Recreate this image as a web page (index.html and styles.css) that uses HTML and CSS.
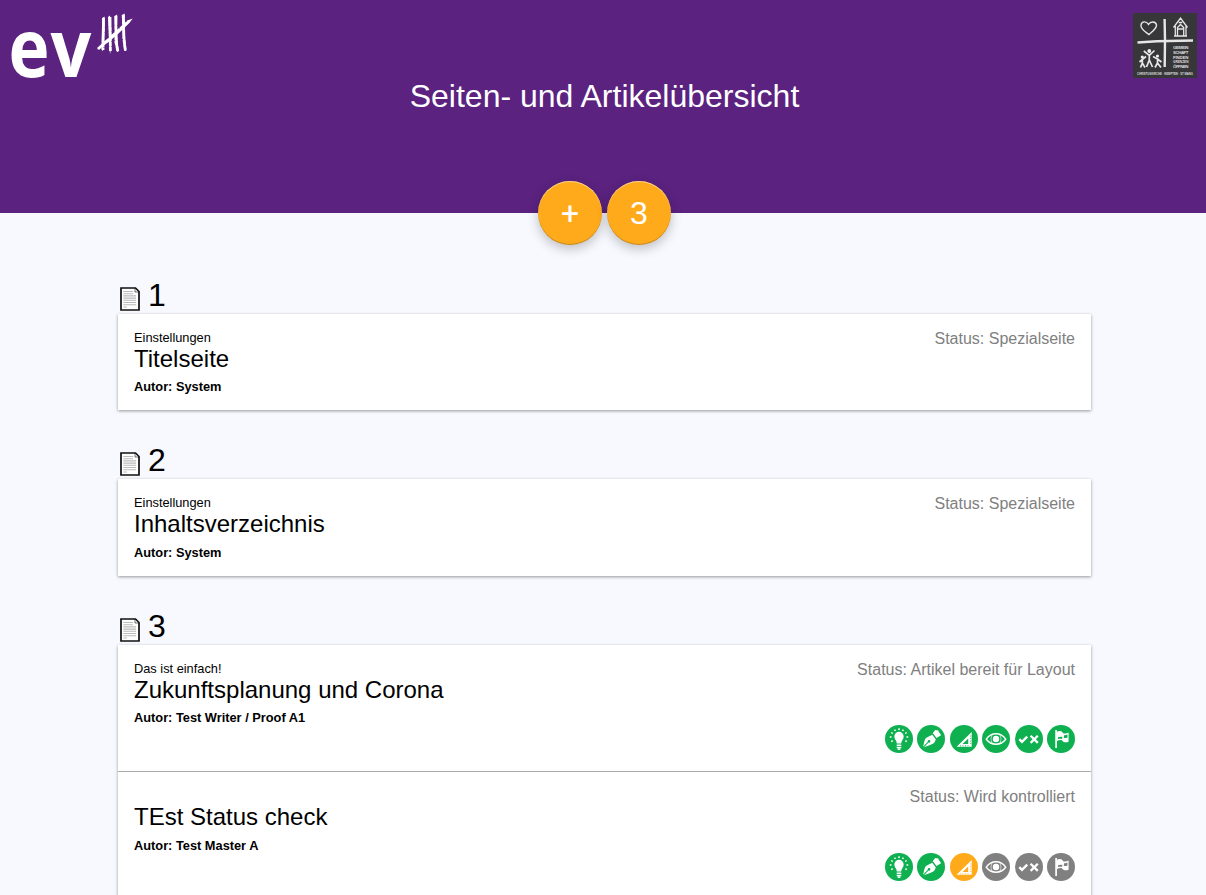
FILE: index.html
```html
<!DOCTYPE html>
<html lang="de">
<head>
<meta charset="utf-8">
<title>Seiten- und Artikelübersicht</title>
<link rel="stylesheet" href="styles.css">
</head>
<body>
<svg class="defs" aria-hidden="true">
  <symbol id="doc" viewBox="0 0 20 24">
    <path d="M1 1H15.5L19 4.5V23H1Z" fill="#fff" stroke="#111" stroke-width="1.7"/>
    <path d="M15 1V5H19" fill="none" stroke="#111" stroke-width=".6"/>
    <path d="M3.3 4.5H13M3.3 6.7H13M3.3 8.9H16M3.3 11.1H16M3.3 13.3H16M3.3 15.5H16M3.3 17.7H16M3.3 20H7" stroke="#bbb" stroke-width="1.1"/>
  </symbol>
  <symbol id="bulb" viewBox="0 0 28 28">
    <path d="M11.8 18.6C11.8 15.5 9.3 14.5 9.3 11.5A4.7 4.7 0 0 1 18.7 11.5C18.7 14.5 16.2 15.5 16.2 18.6Z" fill="#fff"/>
    <path d="M11.7 20.3H16.3M11.7 22.4H16.3M12.7 24.3H15.3" stroke="#fff" stroke-width="1.5"/>
    <path d="M14 3.3V5M9.6 4.6L10.4 6M18.4 4.6L17.6 6M6.3 7.5L7.8 8.5M21.7 7.5L20.2 8.5M4.8 12H6.5M21.5 12H23.2M6.2 16.6L7.7 15.7M21.8 16.6L20.3 15.7" stroke="#fff" stroke-width="1.5"/>
  </symbol>
  <symbol id="pen" viewBox="0 0 28 28">
    <path d="M6 21.8C7.3 18.5 7 14.8 9.3 12.7L15.2 9.7L18.7 14.2C17.8 19.2 14.5 19.5 7 22.2L11.5 17.5A1.3 1.3 0 1 0 10.8 16.8Z" fill="#fff"/>
    <path d="M15.7 8.3L18 5.3C19.3 4.2 20 6.2 21 5.1C21.7 7.3 23.5 9 24 10.2L19.6 13Z" fill="#fff"/>
  </symbol>
  <symbol id="ruler" viewBox="0 0 28 28">
    <path fill-rule="evenodd" d="M6.6 21.8L21.7 7V21.8ZM12.6 18.9H18.2V13.5Z" fill="#fff"/>
    <path d="M10.5 21.3V20.2M13 21.3V20.2M15.5 21.3V20.2M18 21.3V20.2M21.2 18.5H20M21.2 16H20M21.2 13.5H20M21.2 11H20" stroke="currentColor" stroke-width=".7"/>
  </symbol>
  <symbol id="eye" viewBox="0 0 28 28">
    <path d="M4.3 14.2C9.2 7 18.8 7 23.7 14.2C18.8 20.8 9.2 20.8 4.3 14.2Z" fill="none" stroke="#fff" stroke-width="1.5"/>
    <circle cx="14" cy="14" r="3.2" fill="#fff"/>
    <path d="M10 10Q7.8 14 10 18.2M18 10Q20.2 14 18 18.2" fill="none" stroke="#fff" stroke-width=".6"/>
  </symbol>
  <symbol id="check" viewBox="0 0 28 28">
    <path d="M4.3 14.2L7 16.8L12.2 11.6M15.6 10.7L22.8 17.9M22.8 10.7L15.6 17.9" fill="none" stroke="#fff" stroke-width="2.3"/>
  </symbol>
  <symbol id="flag" viewBox="0 0 28 28">
    <path d="M9.1 5V23" stroke="#fff" stroke-width="1.7"/>
    <path fill-rule="evenodd" d="M10 6.7C12.8 5.5 15.2 6.1 16 8.2C18 8.9 19.5 8.6 21.6 7.6V16.7C19 17.8 16.3 17.5 15.2 15.5C13.5 14.7 12 15 10 15.9ZM11 12.3V14.1C12.5 13.5 13.8 13.5 15 14L15.4 12C14 11.5 12.5 11.5 11 12.3ZM17 10.2L16.8 12.8C18.2 13.4 19.2 13 20.5 12.4V9.6C19.3 10.2 18.2 10.4 17 10.2Z" fill="#fff"/>
  </symbol>
</svg>

<header class="banner">
  <svg class="logo" viewBox="0 0 150 90" role="img" aria-label="ev">
    <text class="logo-text" y="77"><tspan x="8.6" textLength="41" lengthAdjust="spacingAndGlyphs">e</tspan><tspan x="50.6" textLength="40.8" lengthAdjust="spacingAndGlyphs">v</tspan></text>
    <g fill="#fff">
      <path d="M102.2 18L104.6 16.5L104.7 29L103.6 42L102.9 51.5L101.6 49Z"/>
      <path d="M108 17L110 15.5L111.3 28L110.9 50L110 54L109 38Z"/>
      <path d="M114.5 16L117.2 14.5L117 30L118.6 51.5L117 52L115.2 40Z"/>
      <path d="M121.8 15L124.7 13.5L124.7 32L126.4 51L124.3 51L122.8 38Z"/>
      <path d="M96.5 49.8L106 40.4L118 30.2L128 20.2L132.7 18.5L129.5 22.7L118.5 33.5L108 42.5Z"/>
    </g>
    <path d="M103.5 18L103 50M110 17L110.4 51M115.9 16V42L117.8 51M123.3 15L123.9 39L125.3 50M98 49L129 21" stroke="#fff" stroke-width="2.8" stroke-dasharray="9 .6 5 .4" fill="none"/>
  </svg>
  <h1 class="title">Seiten- und Artikelübersicht</h1>
  <svg class="crest" viewBox="0 0 64 65" role="img" aria-label="Gemeinschaft finden, Grenzen öffnen">
    <rect width="64" height="65" fill="#373638"/>
    <g fill="none" stroke="#e6e6e6">
      <path d="M31.6 6L32 27L31.7 54" stroke-width="2.4"/>
      <path d="M4.5 29.4L24 28.2L60 27.5" stroke-width="2.5"/>
      <path d="M16 21.6C12 18.5 7.3 16 8 11.8C8.7 8.2 13.2 7.8 15.5 11.5C17.5 8 22.8 8 23.5 12C23.8 15.5 19.3 18.5 16 21.6Z" stroke-width="1.4"/>
      <path d="M40.5 14.5L47.5 5L54.5 14.5M42.3 13V23H53V13M41 23H54M44.5 23V14.5L47.5 11.5L50.7 14.5V23M45 16H50M45.7 9.5H49.3" stroke-width="1.3"/>
      <path d="M16.3 41V47L13.5 54M16.3 47L19.5 54M10.8 38L16.3 42.3L21.5 37.5M9.3 46V50L7.5 54.5M9.3 50L12 54.5M6.5 49L9.3 46.5L13 43.5M24.5 45V50L22 54.5M24.5 50L28 54.5M20 43.5L24.5 46L28.5 49" stroke-width="1.7"/>
    </g>
    <g fill="#eee"><circle cx="16.3" cy="38" r="1.9"/><circle cx="9.3" cy="44" r="1.6"/><circle cx="24.5" cy="43" r="1.6"/></g>
    <g class="crest-text">
      <text x="40" y="36.3" textLength="15.5">GEMEIN</text>
      <text x="40" y="41" textLength="15.5">SCHAFT</text>
      <text x="40" y="45.7" textLength="15.5">FINDEN</text>
      <text x="40" y="50.4" textLength="15.5" lengthAdjust="spacingAndGlyphs">GRENZEN</text>
      <text x="40" y="55.1" textLength="15.5">ÖFFNEN</text>
      <text class="crest-foot" x="4" y="61.7" textLength="56" lengthAdjust="spacingAndGlyphs">CHRISTUSKIRCHE · KEMPTEN · ST MANG</text>
    </g>
  </svg>
  <nav class="actions"><button class="fab fab-add">+</button><button class="fab">3</button></nav>
</header>

<main class="pages">
  <section class="page">
    <h2 class="page-head"><svg class="doc"><use href="#doc"/></svg>1</h2>
    <div class="card">
      <article class="article">
        <div class="info"><p class="kicker">Einstellungen</p><h3 class="name">Titelseite</h3><p class="author">Autor: System</p></div>
        <p class="status">Status: Spezialseite</p>
      </article>
    </div>
  </section>
  <section class="page">
    <h2 class="page-head"><svg class="doc"><use href="#doc"/></svg>2</h2>
    <div class="card">
      <article class="article roomy">
        <div class="info"><p class="kicker">Einstellungen</p><h3 class="name">Inhaltsverzeichnis</h3><p class="author">Autor: System</p></div>
        <p class="status">Status: Spezialseite</p>
      </article>
    </div>
  </section>
  <section class="page">
    <h2 class="page-head"><svg class="doc"><use href="#doc"/></svg>3</h2>
    <div class="card">
      <article class="article tall">
        <div class="info"><p class="kicker">Das ist einfach!</p><h3 class="name">Zukunftsplanung und Corona</h3><p class="author">Autor: Test Writer / Proof A1</p></div>
        <div class="side">
          <p class="status">Status: Artikel bereit für Layout</p>
          <div class="steps">
            <svg class="step done"><use href="#bulb"/></svg><svg class="step done"><use href="#pen"/></svg><svg class="step done"><use href="#ruler"/></svg><svg class="step done"><use href="#eye"/></svg><svg class="step done"><use href="#check"/></svg><svg class="step done"><use href="#flag"/></svg>
          </div>
        </div>
      </article>
      <article class="article tall roomy">
        <div class="info"><p class="kicker"></p><h3 class="name">TEst Status check</h3><p class="author">Autor: Test Master A</p></div>
        <div class="side">
          <p class="status">Status: Wird kontrolliert</p>
          <div class="steps">
            <svg class="step done"><use href="#bulb"/></svg><svg class="step done"><use href="#pen"/></svg><svg class="step active"><use href="#ruler"/></svg><svg class="step"><use href="#eye"/></svg><svg class="step"><use href="#check"/></svg><svg class="step"><use href="#flag"/></svg>
          </div>
        </div>
      </article>
    </div>
  </section>
</main>
</body>
</html>
```
FILE: styles.css
```css
* { box-sizing: border-box; }
html { height: 100%; overflow: hidden; }
body {
  margin: 0;
  height: 100%;
  overflow: hidden;
  background: #f8f9fe;
  color: #000;
  font-family: "Liberation Sans", Arial, sans-serif;
}
h1, h2, h3, p { margin: 0; font-weight: 400; }
.defs { position: absolute; width: 0; height: 0; }

.banner {
  position: relative;
  display: grid;
  grid-template-columns: 150px 1fr 147px;
  height: 213px;
  background: #5b2280;
  color: #fff;
}
.logo { width: 150px; height: 90px; overflow: visible; }
.logo-text { font: 700 81px "Open Sans", sans-serif; fill: #fff; }
.title { padding-top: 78px; text-align: center; font-size: 32px; line-height: 37px; }
.crest { width: 64px; height: 65px; margin: 13px 9px 0 0; justify-self: end; }
.crest-text { font: 700 4.4px "Liberation Sans", sans-serif; fill: #ddd; }
.crest-foot { font-size: 2.9px; }

.actions {
  position: absolute;
  left: 0;
  right: 0;
  bottom: -32px;
  display: flex;
  justify-content: center;
  gap: 5px;
  padding-left: 3px;
}
.fab {
  width: 64px;
  height: 64px;
  padding: 0;
  border: 0;
  border-radius: 50%;
  background: #ffaa1a;
  color: #fff;
  font: 32px/64px "Liberation Sans", Arial, sans-serif;
  box-shadow: 0 4px 12px rgba(0, 0, 0, .24), inset 0 -1px 0 rgba(0, 0, 0, .2), inset 0 1px 0 rgba(255, 255, 255, .5);
}
.fab-add { padding-bottom: 1px; font-family: Roboto, sans-serif; line-height: 62px; }

.pages { width: 973px; margin: 0 0 0 118px; padding-top: 64px; }
.page { margin-bottom: 32px; }
.page-head {
  display: flex;
  align-items: flex-end;
  gap: 8px;
  height: 37px;
  padding-left: 2px;
  font-size: 32px;
  line-height: 37px;
}
.doc { width: 20px; height: 24px; margin-bottom: 3px; }
.card { background: #fff; box-shadow: 0 1px 3px rgba(0, 0, 0, .4); }
.article { display: flex; justify-content: space-between; height: 96px; padding: 16px; }
.article.roomy { height: 97px; }
.article.roomy .author { margin-top: 7px; }
.article.tall { height: 126px; }
.tall + .article.tall { height: 128px; border-top: 1px solid #aaa; }
.kicker { height: 15px; font-size: 12.8px; line-height: 15px; }
.name { font-size: 24px; line-height: 28px; }
.author { margin-top: 6px; font-size: 12.8px; line-height: 15px; font-weight: 700; }
.status { color: #808080; font-size: 16px; line-height: 18px; text-align: right; }
.side { display: flex; flex-direction: column; justify-content: space-between; align-items: flex-end; }
.steps { display: flex; gap: 4.4px; margin-bottom: 2px; }
.step { width: 28px; height: 28px; border-radius: 50%; background: #808080; color: #808080; }
.done { background: #0eb050; color: #0eb050; }
.active { background: #ffaa1a; color: #ffaa1a; }
```
